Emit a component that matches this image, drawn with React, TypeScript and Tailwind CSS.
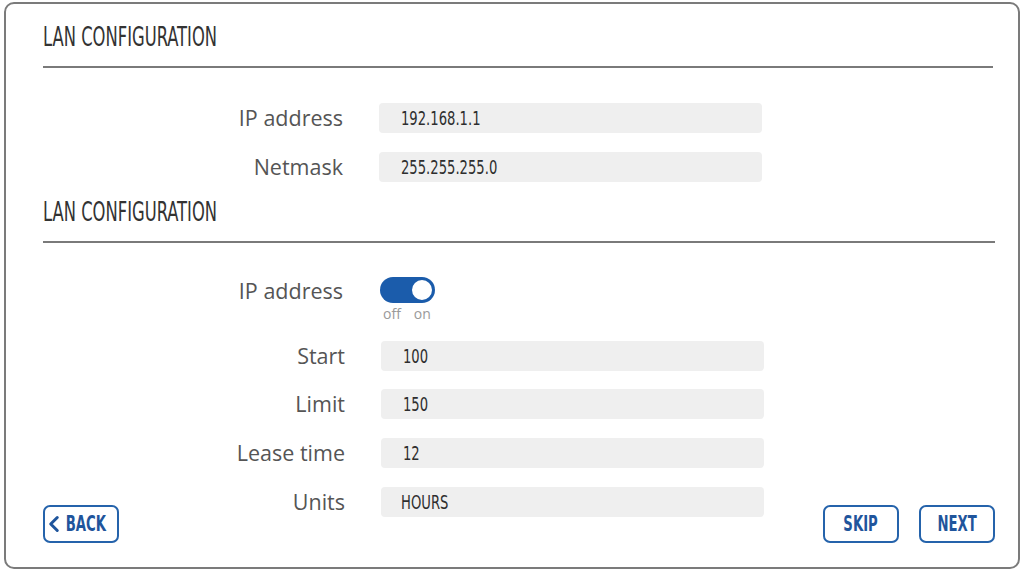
import { ChevronLeft } from 'lucide-react';

const narrow = "font-['DejaVu_Sans_Condensed','Liberation_Sans_Narrow',sans-serif]";

function Heading({ title }: { title: string }) {
  return (
    <h2 className={`${narrow} h-[30px] text-[26px] leading-[30px] text-[#333] origin-left scale-x-[0.7] whitespace-nowrap`}>
      {title}
    </h2>
  );
}

function Value({ text }: { text: string }) {
  return (
    <span className={`${narrow} inline-block text-[19px] leading-[30px] text-[#2e2e2e] origin-left scale-x-[0.77] whitespace-nowrap`}>{text}</span>
  );
}

function Field({ label, value, className = '' }: { label: string; value: string; className?: string }) {
  return (
    <div className={`flex items-center h-[30px] ${className}`}>
      <div className="w-[300px] text-right text-[21.5px] leading-[30px] text-[#555]">{label}</div>
      <div className="ml-[36px] w-[383px] h-[30px] rounded-[4px] bg-[#efefef] pl-[22px] flex items-center">
        <Value text={value} />
      </div>
    </div>
  );
}

function OutlineButton({ children, className = '' }: { children: React.ReactNode; className?: string }) {
  return (
    <button
      className={`h-[38px] w-[76px] rounded-[7px] border-2 border-[#2563ab] text-[#1f559c] flex items-center justify-center ${className}`}
    >
      {children}
    </button>
  );
}

function ButtonLabel({ text }: { text: string }) {
  return (
    <span className={`${narrow} inline-block text-[21px] leading-[30px] font-bold scale-x-[0.7] whitespace-nowrap`}>{text}</span>
  );
}

export default function App() {
  return (
    <div className="w-[1024px] h-[571px] bg-white pt-[2px] pl-[4px] font-['Open_Sans',sans-serif]">
      <div className="w-[1016px] h-[567px] border-2 border-[#7b7b7b] rounded-[10px] pl-[37px] pr-[23px] pt-[18px]">
        {/* Static address */}
        <Heading title="LAN CONFIGURATION" />
        <div className="mt-[14px] mr-[2px] h-[2px] bg-[#7a7a7a]" />

        <Field label="IP address" value="192.168.1.1" className="mt-[35px]" />
        <Field label="Netmask" value="255.255.255.0" className="mt-[19px]" />

        {/* DHCP */}
        <div className="mt-[15px]">
          <Heading title="LAN CONFIGURATION" />
        </div>
        <div className="mt-[14px] h-[2px] bg-[#7a7a7a]" />

        <div className="mt-[34px] flex items-start">
          <div className="w-[300px] text-right text-[21.5px] leading-[28px] text-[#555]">IP address</div>
          <div className="ml-[37px] flex flex-col">
            <div className="w-[55px] h-[26px] rounded-full bg-[#1b5cab] relative">
              <div className="absolute right-[1px] top-[1px] w-[24px] h-[24px] rounded-full bg-white border-2 border-[#1b5cab]" />
            </div>
            <div className="mt-[3px] flex gap-[13px] pl-[3px] text-[14px] leading-[15px] text-[#9a9a9a]">
              <span>off</span>
              <span>on</span>
            </div>
          </div>
        </div>

        <div className="ml-[2px]">
          <Field label="Start" value="100" className="mt-[20px]" />
          <Field label="Limit" value="150" className="mt-[18px]" />
          <Field label="Lease time" value="12" className="mt-[19px]" />
        </div>

        <div className="mt-[19px] flex h-[56px]">
          <div className="w-[302px] flex justify-between">
            <OutlineButton className="self-end">
              <ChevronLeft size={26} strokeWidth={2.8} className="-ml-[6px] -mr-[10px]" />
              <ButtonLabel text="BACK" />
            </OutlineButton>
            <div className="h-[30px] flex items-center text-[21.5px] leading-[30px] text-[#555]">Units</div>
          </div>
          <div className="ml-[36px] w-[383px] h-[30px] rounded-[4px] bg-[#efefef] pl-[20px] flex items-center">
            <Value text="HOURS" />
          </div>
          <div className="flex-1 flex justify-end items-end gap-[20px]">
            <OutlineButton className="w-[75px]">
              <ButtonLabel text="SKIP" />
            </OutlineButton>
            <OutlineButton>
              <ButtonLabel text="NEXT" />
            </OutlineButton>
          </div>
        </div>
      </div>
    </div>
  );
}
